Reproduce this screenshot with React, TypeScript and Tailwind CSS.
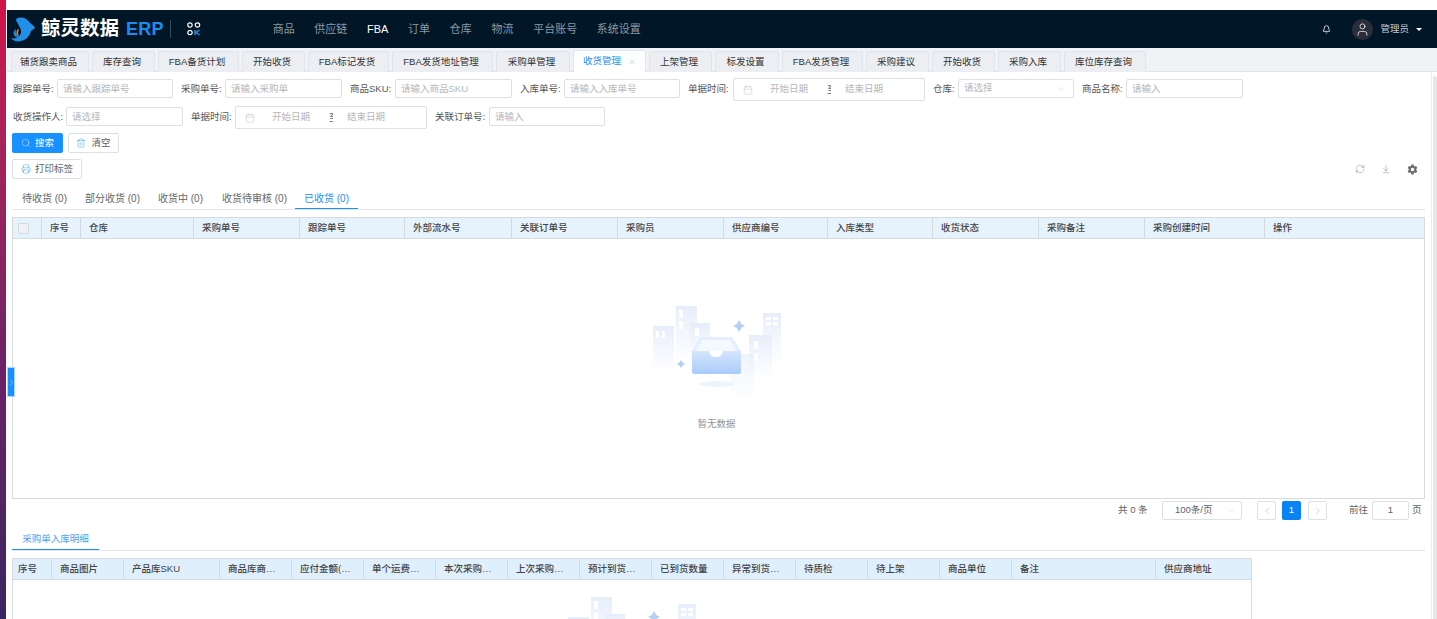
import {
  ArrowDownToLine,
  Bell,
  Calendar,
  ChevronDown,
  ChevronLeft,
  ChevronRight,
  Printer,
  RefreshCw,
  Search,
  Trash2,
  User,
  X,
} from "lucide-react";
import { IoSettingsSharp } from "react-icons/io5";

const NAV = ["商品", "供应链", "FBA", "订单", "仓库", "物流", "平台账号", "系统设置"];

const TABS = [
  { label: "铺货跟卖商品", w: "w-[78px]" },
  { label: "库存查询", w: "w-[63px]" },
  { label: "FBA备货计划", w: "w-[81px]" },
  { label: "开始收货", w: "w-[63px]" },
  { label: "FBA标记发货", w: "w-[81px]" },
  { label: "FBA发货地址管理", w: "w-[101px]" },
  { label: "采购单管理", w: "w-[74px]" },
  { label: "收货管理", w: "w-[73px]", active: true },
  { label: "上架管理", w: "w-[63px]" },
  { label: "标发设置", w: "w-[64px]" },
  { label: "FBA发货管理", w: "w-[81px]" },
  { label: "采购建议", w: "w-[63px]" },
  { label: "开始收货", w: "w-[63px]" },
  { label: "采购入库", w: "w-[63px]" },
  { label: "库位库存查询", w: "w-[82px]" },
];

const SUB_TABS = [
  { label: "待收货 (0)", w: "w-[63px]" },
  { label: "部分收货 (0)", w: "w-[73px]" },
  { label: "收货中 (0)", w: "w-[64px]" },
  { label: "收货待审核 (0)", w: "w-[73px]" },
];

const MAIN_COLS = ["序号", "仓库", "采购单号", "跟踪单号", "外部流水号", "关联订单号", "采购员", "供应商编号", "入库类型", "收货状态", "采购备注", "采购创建时间", "操作"];

const DETAIL_COLS = ["序号", "商品图片", "产品库SKU", "商品库商…", "应付金额(…", "单个运费…", "本次采购…", "上次采购…", "预计到货…", "已到货数量", "异常到货…", "待质检", "待上架", "商品单位", "备注", "供应商地址"];

function Logo() {
  return (
    <div className="flex items-center">
      <svg width="26" height="26" viewBox="0 0 26 26" className="shrink-0">
        <path d="M6 3C11 0 17 2 20 7c2 1 4 3 5 5-1 1-3 2-4 3-1 5-5 9-10 10-4 1-8 0-10-3 3 1 7 0 9-3 2-3 1-6-1-9C8 7 6 6 6 3z" fill="#1f8fe8" />
        <path d="M6 13c-1 3 0 7 4 8-2 1-5 0-6-2-1-2 0-5 2-6z" fill="#1f8fe8" />
        <path d="M8 14c-1 2-1 4 0 5" fill="none" stroke="#f0832e" strokeWidth="1.6" strokeLinecap="round" />
      </svg>
      <span className="ml-[5px] text-[19.5px] font-bold leading-none tracking-normal text-white">鲸灵数据</span>
      <span className="ml-[7px] text-[18px] font-bold leading-none tracking-[0.2px] text-[#1b8cf0]">ERP</span>
      <span className="ml-[6px] h-[18px] w-px bg-[#3a4a58]" />
      <svg width="14" height="14" viewBox="0 0 14 14" className="ml-[16px] shrink-0">
        <circle cx="3" cy="3" r="2.2" fill="none" stroke="#fff" strokeWidth="1.2" />
        <circle cx="10.5" cy="3" r="2.2" fill="none" stroke="#fff" strokeWidth="1.2" />
        <circle cx="3" cy="10.5" r="2.2" fill="none" stroke="#fff" strokeWidth="1.2" />
        <path d="M8 8v5M12.5 8L9 10.5l3.5 2.5" fill="none" stroke="#2b8fe6" strokeWidth="1.4" />
      </svg>
    </div>
  );
}

function TextField({ label, labelW, inputW, placeholder }: { label: string; labelW: string; inputW: string; placeholder: string }) {
  return (
    <div className="mr-[8px] flex items-start">
      <label className={`${labelW} h-[21px] shrink-0 whitespace-nowrap leading-[21px] text-[#555]`}>{label}</label>
      <input
        readOnly
        placeholder={placeholder}
        className={`${inputW} mt-px h-[19px] rounded-[2px] border border-[#dcdfe6] bg-white px-[5px] text-[9.5px] outline-none placeholder:text-[#b4b7bd]`}
      />
    </div>
  );
}

function RangeField({ label, labelW }: { label: string; labelW: string }) {
  return (
    <div className="mr-[8px] flex items-start">
      <label className={`${labelW} h-[21px] shrink-0 whitespace-nowrap leading-[21px] text-[#555]`}>{label}</label>
      <div className="flex h-[23px] w-[192px] items-center rounded-[2px] border border-[#dcdfe6] text-[#b4b7bd]">
        <Calendar size={10} strokeWidth={1} className="ml-[9px] shrink-0" />
        <span className="ml-[7px] w-[58px] shrink-0 text-center">开始日期</span>
        <span className="ml-[9px] h-[11px] w-[4px] shrink-0 overflow-hidden leading-[11px] text-[#606266]">至</span>
        <span className="ml-[4px] w-[58px] shrink-0 text-center">结束日期</span>
      </div>
    </div>
  );
}

function Empty() {
  return (
    <div className="flex flex-col items-center">
      <svg width="132" height="100" viewBox="0 0 132 100">
        <defs>
          <linearGradient id="bld" x1="0" y1="0" x2="0" y2="1">
            <stop offset="0" stopColor="#e7eefb" />
            <stop offset="1" stopColor="#ffffff" />
          </linearGradient>
          <linearGradient id="tray" x1="0" y1="0" x2="0" y2="1">
            <stop offset="0" stopColor="#d5e5fd" />
            <stop offset="1" stopColor="#a9cbfa" />
          </linearGradient>
        </defs>
        <rect x="2" y="22" width="21" height="46" fill="url(#bld)" />
        <rect x="25" y="2" width="21" height="58" fill="url(#bld)" />
        <rect x="39" y="19" width="20" height="40" fill="url(#bld)" />
        <rect x="112" y="9" width="18" height="52" fill="url(#bld)" />
        <rect x="98" y="31" width="23" height="44" fill="url(#bld)" />
        <rect x="80" y="50" width="23" height="46" fill="url(#bld)" opacity="0.7" />
        <g fill="#fff">
          <rect x="5" y="27" width="3" height="7" />
          <rect x="11" y="27" width="3" height="7" />
          <rect x="28" y="6" width="4" height="8" />
          <rect x="28" y="17" width="4" height="8" />
          <rect x="44" y="24" width="4" height="8" />
          <rect x="115" y="13" width="5" height="3" />
          <rect x="122" y="13" width="5" height="3" />
          <rect x="115" y="18" width="5" height="3" />
          <rect x="122" y="18" width="5" height="3" />
          <rect x="103" y="37" width="4" height="8" />
          <rect x="103" y="49" width="4" height="8" />
        </g>
        <ellipse cx="66" cy="80" rx="17" ry="3" fill="#eef4fd" />
        <path d="M49 33h32l9 14H41z" fill="#e3eefe" />
        <path d="M51 36h28l6 11H45z" fill="#f4f8ff" />
        <path d="M41 47h17c1 5 4 6 7 6s6-1 7-6h18v21a2 2 0 0 1-2 2H43a2 2 0 0 1-2-2z" fill="url(#tray)" />
        <path d="M88 16l2.2 4 3.8 2-3.8 2-2.2 4-2.2-4-3.8-2 3.8-2z" fill="#b5cff5" />
        <path d="M30 56l1.6 2.6 2.6 1.4-2.6 1.4L30 64l-1.6-2.6-2.6-1.4 2.6-1.4z" fill="#b5cff5" />
      </svg>
      <span className="mt-[13px] text-[#909399]">暂无数据</span>
    </div>
  );
}

export default function App() {
  return (
    <div className="flex h-[619px] w-[1437px] overflow-hidden bg-white text-[9.5px] text-[#333] [font-family:'Liberation_Sans','Noto_Sans_CJK_SC',sans-serif]">
      <div className="mr-px w-[6px] shrink-0 bg-gradient-to-b from-[#d0124a] via-[#6b2166] via-60% to-[#3a2560]" />

      <div className="flex min-w-0 flex-1 flex-col pt-[10px]">
        <header className="flex h-[38px] shrink-0 items-center bg-[#011627] pl-[3px]">
          <Logo />
          <nav className="ml-[72px] flex gap-[19.7px] text-[11px] text-[#8c98a4]">
            {NAV.map((item) => (
              <span key={item} className={item === "FBA" ? "text-white" : ""}>
                {item}
              </span>
            ))}
          </nav>
          <div className="ml-auto flex items-center pr-[15px] text-[#c3cad1]">
            <Bell size={9} className="text-white" />
            <span className="ml-[21px] flex h-[21px] w-[21px] items-center justify-center rounded-full bg-[#2a2e3b]">
              <User size={15} strokeWidth={1.2} className="text-white" />
            </span>
            <span className="ml-[7px]">管理员</span>
            <span className="ml-[7px] h-0 w-0 border-x-[3px] border-t-[3px] border-x-transparent border-t-white" />
          </div>
        </header>

        <div className="flex h-[24px] shrink-0 items-end gap-[3px] border-b border-[#dfe4ed] bg-[#f0f2f5] pl-[4px]">
          {TABS.map((tab, i) => (
            <div
              key={i}
              className={`${tab.w} ${tab.active ? "h-[22px] bg-white text-[#1890ff]" : "h-[21px] bg-[#eceef1] pr-[3px] text-[#333]"} -mb-px flex shrink-0 items-center justify-center gap-[7px] rounded-t-[3px] border border-b-0 border-[#dfe4ed]`}
            >
              {tab.label}
              {tab.active && <X size={8} strokeWidth={1.3} className="text-[#7fbdf7]" />}
            </div>
          ))}
        </div>

        <div className="flex min-h-0 flex-1">
          <main className="relative min-w-0 flex-1 pl-[5px] pt-[6px]">
            <div className="flex h-[28px] pl-px">
              <TextField label="跟踪单号:" labelW="w-[44px]" inputW="w-[116px]" placeholder="请输入跟踪单号" />
              <TextField label="采购单号:" labelW="w-[44px]" inputW="w-[117px]" placeholder="请输入采购单" />
              <TextField label="商品SKU:" labelW="w-[45px]" inputW="w-[117px]" placeholder="请输入商品SKU" />
              <TextField label="入库单号:" labelW="w-[44px]" inputW="w-[116px]" placeholder="请输入入库单号" />
              <RangeField label="单据时间:" labelW="w-[45px]" />
              <div className="mr-[8px] flex items-start">
                <label className="h-[21px] w-[25px] shrink-0 leading-[21px] text-[#555]">仓库:</label>
                <div className="mt-px flex h-[19px] w-[116px] items-center justify-between rounded-[2px] border border-[#dcdfe6] px-[5px] text-[#b4b7bd]">
                  请选择
                  <ChevronDown size={10} strokeWidth={1} className="mr-[2px]" />
                </div>
              </div>
              <TextField label="商品名称:" labelW="w-[44px]" inputW="w-[117px]" placeholder="请输入" />
            </div>
            <div className="flex h-[27px] pl-px">
              <TextField label="收货操作人:" labelW="w-[53px]" inputW="w-[117px]" placeholder="请选择" />
              <RangeField label="单据时间:" labelW="w-[44px]" />
              <TextField label="关联订单号:" labelW="w-[54px]" inputW="w-[116px]" placeholder="请输入" />
            </div>

            <div className="flex h-[20px] gap-[5px]">
              <button className="flex w-[51px] items-center justify-center gap-[4px] rounded-[2px] bg-[#1890ff] text-white">
                <Search size={10} strokeWidth={1} />
                搜索
              </button>
              <button className="flex w-[51px] items-center justify-center gap-[5px] rounded-[2px] border border-[#dcdfe6] text-[#606266]">
                <Trash2 size={10} strokeWidth={1} className="text-[#1890ff]" />
                清空
              </button>
            </div>

            <div className="mt-[6px] flex h-[20px] w-[1413px] items-center justify-between">
              <button className="flex h-[20px] w-[70px] items-center justify-center gap-[4px] rounded-[2px] border border-[#dcdfe6] text-[#606266]">
                <Printer size={10} strokeWidth={1} className="text-[#1890ff]" />
                打印标签
              </button>
              <div className="flex items-center gap-[16px] pr-[7px] text-[#6f7278]">
                <RefreshCw size={10} strokeWidth={1} />
                <ArrowDownToLine size={10} strokeWidth={1} />
                <IoSettingsSharp size={11} className="text-[#6b6e73]" />
              </div>
            </div>

            <div className="mt-[9px] flex h-[22px] w-[1413px] border-b border-[#e4e7ed] text-[10px] text-[#666]">
              <div className="flex items-start pl-[10px] pt-[3px]">
                {SUB_TABS.map((t) => (
                  <span key={t.label} className={`${t.w} whitespace-nowrap`}>
                    {t.label}
                  </span>
                ))}
              </div>
              <span className="h-[21px] w-[63px] border-b border-[#1890ff] pt-[3px] text-center text-[#1890ff]">已收货 (0)</span>
            </div>

            <div className="mt-[7px] flex h-[282px] w-[1413px] flex-col border border-[#d6d9dd]">
              <div className="grid h-[21px] shrink-0 grid-cols-[29px_39px_113px_106px_105px_107px_106px_106px_104px_105px_106px_106px_120px_1fr] border-b border-[#d6d9dd] bg-[#e6f3fc] font-medium text-[#444]">
                <div className="flex items-center border-r border-[#d6d9dd] pl-[5px]">
                  <span className="h-[11px] w-[11px] rounded-[1px] border border-[#d6d9dd] bg-[#eef2f7]" />
                </div>
                {MAIN_COLS.map((c) => (
                  <div key={c} className="flex items-center border-r border-[#d6d9dd] pl-[8px] last:border-r-0">
                    {c}
                  </div>
                ))}
              </div>
              <div className="flex flex-1 flex-col items-center pt-[65px] pr-[4px]">
                <Empty />
              </div>
            </div>

            <div className="mt-[2px] flex h-[19px] w-[1413px] items-center pl-[1106px] text-[#606266]">
              <span className="w-[44px]">共 0 条</span>
              <div className="flex h-full w-[80px] items-center justify-between rounded-[2px] border border-[#dcdfe6] pl-[12px] pr-[5px]">
                100条/页
                <ChevronDown size={9} strokeWidth={1} className="text-[#c0c4cc]" />
              </div>
              <span className="ml-[15px] flex h-full w-[19px] items-center justify-center rounded-[2px] border border-[#dcdfe6] text-[#909399]">
                <ChevronLeft size={10} strokeWidth={1} />
              </span>
              <span className="ml-[6px] flex h-full w-[19px] items-center justify-center rounded-[2px] bg-[#0a84f5] text-white">1</span>
              <span className="ml-[7px] flex h-full w-[19px] items-center justify-center rounded-[2px] border border-[#dcdfe6] text-[#909399]">
                <ChevronRight size={10} strokeWidth={1} />
              </span>
              <span className="ml-[22px] w-[23px]">前往</span>
              <span className="flex h-full w-[37px] items-center justify-center rounded-[2px] border border-[#dcdfe6]">1</span>
              <span className="ml-[3px]">页</span>
            </div>

            <div className="mt-px h-[30px] w-[1413px] border-b border-[#e4e7ed]">
              <div className="h-[29px] w-[87px] border-b border-[#1890ff] pt-[11px] text-center text-[#4aa3f5]">采购单入库明细</div>
            </div>

            <div className="mt-[7px] w-[1240px] border border-[#d6d9dd]">
              <div className="grid h-[21px] grid-cols-[39px_72px_96px_72px_72px_72px_72px_72px_72px_72px_72px_72px_72px_72px_144px_1fr] border-b border-[#d6d9dd] bg-[#e0effc] font-medium text-[#444]">
                {DETAIL_COLS.map((c, i) => (
                  <div key={c} className={`flex items-center whitespace-nowrap border-r border-[#d6d9dd] last:border-r-0 ${i === 0 ? "pl-[5px]" : "pl-[8px]"}`}>
                    {c}
                  </div>
                ))}
              </div>
              <div className="flex h-[200px] flex-col items-center pt-[15px]">
                <Empty />
              </div>
            </div>

            <button className="absolute left-0 top-[295px] flex h-[30px] w-[8px] items-center justify-center border border-[#a9d4ff] bg-[#1890ff] text-[#dceeff]">
              <ChevronRight size={9} strokeWidth={1.2} className="shrink-0" />
            </button>
          </main>

          <div className="flex w-[6px] shrink-0 border-l border-[#ececec] pl-px pt-[4px]">
            <div className="w-full rounded-t-[2px] bg-[#e6e6e6]" />
          </div>
        </div>
      </div>
    </div>
  );
}
